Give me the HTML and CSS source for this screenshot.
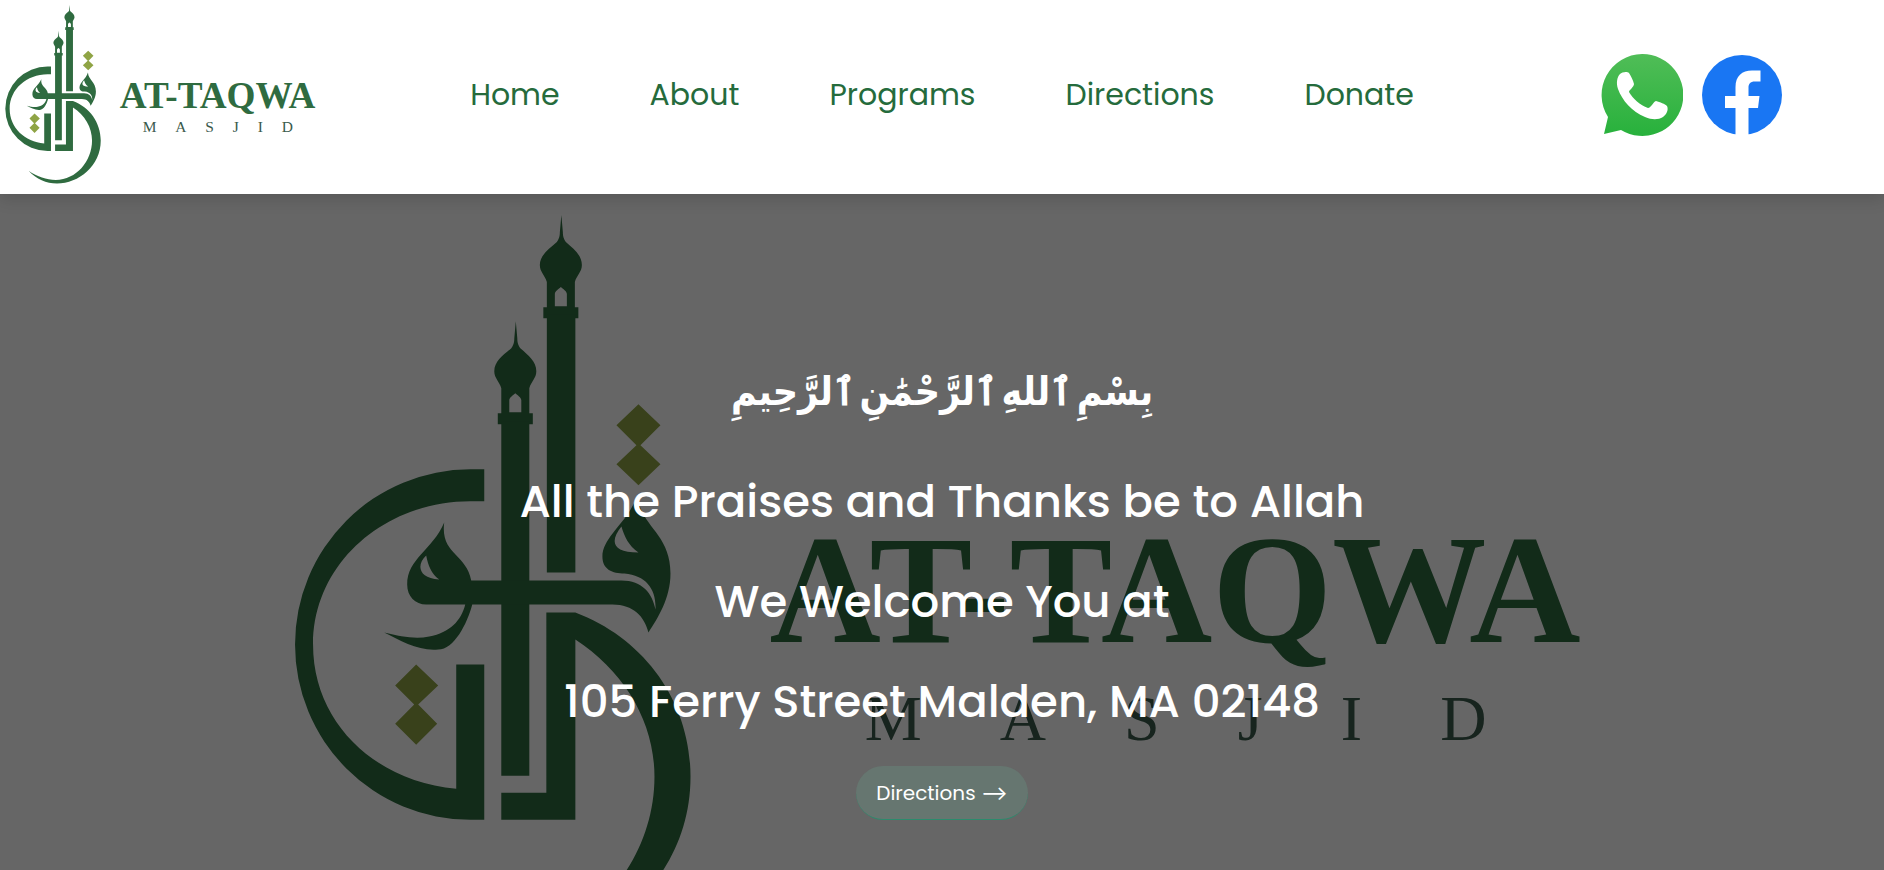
FILE: index.html
```html
<!DOCTYPE html>
<html lang="en">
<head>
<meta charset="utf-8">
<meta name="viewport" content="width=device-width, initial-scale=1">
<title>At-Taqwa Masjid</title>
<link rel="stylesheet" href="styles.css">
</head>
<body>
<svg class="sprite" aria-hidden="true">
  <defs>
    <g id="minaret-top">
      <path fill-rule="evenodd" d="M516.500 320L518 337C518 342 519 344 521 347C529 354 537 360 537 370C537 377 532 380 530 387V412H533.500V423H498.500V412H502V387C500 380 495 377 495 370C495 360 504 354 512 347C514 344 515 342 515 337ZM510 411H522V399C522 396 518 394 516 392C514 394 510 396 510 399Z"/>
    </g>
    <symbol id="logo" viewBox="274 193 1336 803">
      <g class="logo-green">
        <use href="#minaret-top"/>
        <use href="#minaret-top" x="45.500" y="-106"/>
        <path d="M502 420H530V774H502Z M547.500 313H576V571H547.500Z"/>
        <path d="M485 468H471A175 175 0 0 0 471 818H485V663H457V787C377 780 314 722 314 643C314 562 385 500 471 500H485Z"/>
        <path d="M547 611H576C645 637 691 700 691 775C691 880 600 953 510 953C465 953 425 935 392 900C430 925 465 938 505 938C590 938 655 860 655 775C655 720 625 670 576 638V818H502V791H547Z"/>
        <path fill-rule="evenodd" d="M445 521C441 553 467 552 472 579H622C643 579 653 592 656 608C657 588 647 574 625 572C613 572 603 568 603 555C603 535 630 520 638 493C640 525 671 531 671 572C671 597 658 617 649 631C645 615 634 603 613 603H473C468 622 455 648 439 648C420 650 401 639 385 631C402 635 416 638 430 635C451 631 462 619 466 603H427C416 603 408 595 408 583C408 557 433 549 445 521ZM427 554C417 563 419 577 440 578C432 572 429 564 427 554ZM622 525C610 540 613 551 639 551C629 544 625 535 622 525Z"/>
        <text class="logo-name" x="770" y="640">AT-TAQWA</text>
      </g>
      <text class="logo-sub" x="865" y="738">MASJID</text>
      <path class="logo-olive" d="M639 403L661 424L641 444L661 463L639 484L617 463L637 444L617 424Z M417 663L439 684L419 703L438 722L417 743L396 722L415 703L396 684Z"/>
    </symbol>
  </defs>
</svg>

<header class="site-header">
  <a class="brand" href="#" aria-label="At-Taqwa Masjid">
    <svg class="brand-logo" viewBox="0 0 1336 803" aria-hidden="true"><use href="#logo" width="1336" height="803"/></svg>
  </a>
  <nav class="nav">
    <a href="#">Home</a>
    <a href="#">About</a>
    <a href="#">Programs</a>
    <a href="#">Directions</a>
    <a href="#">Donate</a>
  </nav>
  <div class="social">
    <a href="#" aria-label="WhatsApp">
      <svg class="social-icon" viewBox="0 0 82 82" aria-hidden="true">
        <defs><linearGradient id="wa" x1="0" y1="0" x2="0" y2="1"><stop offset="0" stop-color="#50bd57"/><stop offset="1" stop-color="#28b13c"/></linearGradient></defs>
        <path fill="url(#wa)" d="M41 0A41 41 0 1 1 20 76L3 80L7 63A41 41 0 0 1 41 0Z"/>
        <path fill="#fff" d="M19 20C21 18 26 17 28 19C30 22 32 26 33 30C33 33 28 36 28 38C32 45 39 51 47 54C50 54 52 48 55 47C59 48 64 50 66 52C68 56 65 61 62 63C57 66 51 66 44 63C31 58 21 46 17 35C15 29 16 23 19 20Z"/>
      </svg>
    </a>
    <a href="#" aria-label="Facebook">
      <svg class="social-icon" viewBox="0 0 82 82" aria-hidden="true">
        <circle cx="41" cy="41" r="40" fill="#1976f3"/>
        <path fill="#fff" d="M34.500 82V54H24V42H34.500V33C34.500 22 41 16.500 51 16.500H59.500V27.500H54C49 27.500 47.500 30 47.500 34V42H58.500L57 54H47.500V82Z"/>
      </svg>
    </a>
  </div>
</header>

<main class="hero">
  <div class="hero-art" aria-hidden="true">
    <svg class="hero-logo" viewBox="0 0 1336 803"><use href="#logo" width="1336" height="803"/></svg>
  </div>
  <div class="hero-content">
    <p class="bismillah" lang="ar" dir="rtl">بِسْمِ&#8202;ٱللهِ&#8202;ٱلرَّحْمَٰنِ&#8202;ٱلرَّحِيمِ</p>
    <h1 class="hero-line">All the Praises and Thanks be to Allah</h1>
    <p class="hero-line">We Welcome You at</p>
    <p class="hero-line">105 Ferry Street Malden, MA 02148</p>
    <a class="cta" href="#">Directions ⟶</a>
  </div>
</main>
</body>
</html>
```
FILE: styles.css
```css
* { box-sizing: border-box; }

body {
  margin: 0;
  min-height: 100vh;
  display: flex;
  flex-direction: column;
  background: #fff;
  font-family: Poppins, Inter, "Open Sans", sans-serif;
}

.sprite { position: absolute; width: 0; height: 0; }

.logo-green { fill: #2f6b40; }
.logo-olive { fill: #8fa445; }
.logo-name { font: bold 154px "Liberation Serif", serif; }
.logo-sub {
  fill: #3a5a4c;
  font: 64px "Liberation Serif", serif;
  letter-spacing: 78px;
}

.site-header {
  position: relative;
  z-index: 1;
  display: grid;
  grid-template-columns: 1fr auto 1fr;
  align-items: center;
  background: #fff;
  box-shadow: 0 4px 16px rgba(0, 0, 0, 0.16);
}

.brand, .brand-logo { display: block; }
.brand-logo { height: 194px; }

.nav { display: flex; gap: 90px; padding-bottom: 5px; }
.nav a {
  color: #256b3c;
  font-size: 30px;
  line-height: 44px;
  text-decoration: none;
}

.social {
  display: flex;
  justify-content: flex-end;
  gap: 18px;
  padding: 0 101px 5px 0;
}
.social-icon { display: block; width: 82px; height: 82px; }

.hero {
  position: relative;
  flex: 1;
  overflow: hidden;
  background: #fff;
}

.hero-art {
  position: absolute;
  inset: 0;
  display: flex;
  justify-content: center;
  align-items: flex-start;
}
.hero-art::after {
  content: "";
  position: absolute;
  inset: 0;
  background: rgba(0, 0, 0, 0.6);
}
.hero-logo { width: 71%; }

.hero-content {
  position: relative;
  display: flex;
  flex-direction: column;
  align-items: center;
  padding: 148px 16px 48px;
  color: #fff;
  text-align: center;
}

.bismillah {
  margin: 0 0 10px;
  font: bold 39px/100px "DejaVu Sans Condensed", "DejaVu Sans", sans-serif;
}

.hero-line {
  margin: 0;
  font-size: 45px;
  font-weight: 500;
  line-height: 100px;
}

.cta {
  margin-top: 14px;
  padding: 12px 20px 11px;
  border-bottom: 1px solid #2c8b6d;
  border-radius: 27px;
  background: rgba(101, 133, 122, 0.5);
  color: #fff;
  font-size: 20px;
  line-height: 30px;
  text-decoration: none;
}
```
